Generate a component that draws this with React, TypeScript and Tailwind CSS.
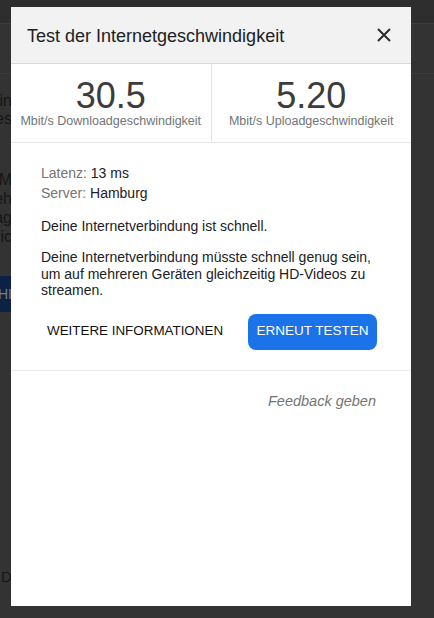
import React from "react";

function BgLine({ text, className = "" }: { text: string; className?: string }) {
  return (
    <div className={`flex w-[12px] justify-end overflow-hidden whitespace-nowrap ${className}`}>
      <span>{text}</span>
    </div>
  );
}

function Stat({ value, label, border }: { value: string; label: string; border?: boolean }) {
  return (
    <div className={`flex flex-1 flex-col items-center pt-[14px] pb-[14px] ${border ? "border-r border-[#e3e3e3]" : ""}`}>
      <div className="text-[36px] leading-[36px] text-[#3c3c3c]">{value}</div>
      <div className="text-[12.5px] leading-[14px] text-[#70757a]">{label}</div>
    </div>
  );
}

export default function App() {
  return (
    <div
      className="relative h-[618px] w-[434px] overflow-hidden bg-[#333333]"
      style={{ fontFamily: '"Liberation Sans", Arial, sans-serif' }}
    >
      {/* dimmed page behind the dialog */}
      <div className="flex flex-col text-[16px] text-[#161616]">
        <div className="h-[24px] border-b border-[#3c3c3c] bg-[#2e2e2e]" />
        <div className="h-[50px] border-b border-[#3c3c3c]" />
        <BgLine text="Mbit/s in" className="mt-[18px] leading-[18px]" />
        <BgLine text="Werte es" className="leading-[18px]" />
        <BgLine text="Test [M" className="mt-[42px] leading-[19px]" />
        <BgLine text="mehr eh" className="leading-[19px]" />
        <BgLine text="Frag ag" className="leading-[19px]" />
        <BgLine text="Technic" className="leading-[19px]" />
        <div className="mt-[30px] flex h-[36px] w-[12px] items-center justify-end overflow-hidden whitespace-nowrap bg-[#0b2245] text-[14px] text-[#7a7a7a]">
          <span>STARTEN HI</span>
        </div>
        <div className="mt-[256px] pl-[1px] text-[15px] leading-[18px]">D</div>
      </div>

      {/* dialog */}
      <div className="absolute left-[11px] top-[7px] flex h-[599px] w-[400px] flex-col bg-white">
        <div className="flex h-[57px] items-center justify-between border-b border-[#d9d9d9] bg-[#f2f2f2] pl-[16px] pr-[20px] pt-[1px]">
          <div className="text-[18px] leading-[24px] text-[#202124]">Test der Internetgeschwindigkeit</div>
          <svg width="14" height="14" viewBox="0 0 14 14" className="mt-[-1px]">
            <path d="M1 1 L13 13 M13 1 L1 13" stroke="#2b2b2b" strokeWidth="2" fill="none" />
          </svg>
        </div>

        <div className="flex border-b border-[#e8e8e8]">
          <Stat value="30.5" label="Mbit/s Downloadgeschwindigkeit" border />
          <Stat value="5.20" label="Mbit/s Uploadgeschwindigkeit" />
        </div>

        <div className="flex flex-col border-b border-[#ebebeb] pb-[20px] pl-[30px] pr-[34px] pt-[20px] text-[14px] text-[#202124]">
          <div className="leading-[20px]">
            <span className="text-[#757575]">Latenz: </span>13 ms
          </div>
          <div className="leading-[20px]">
            <span className="text-[#757575]">Server: </span>Hamburg
          </div>
          <p className="mt-[15px] leading-[17px]">Deine Internetverbindung ist schnell.</p>
          <p className="mt-[14px] leading-[16.5px]">
            Deine Internetverbindung müsste schnell genug sein, um auf mehreren Geräten gleichzeitig HD-Videos zu streamen.
          </p>
          <div className="mt-[15px] flex items-center justify-between">
            <button className="flex h-[36px] items-center px-[6px] text-[13.4px] text-[#111111]">
              WEITERE INFORMATIONEN
            </button>
            <button className="flex h-[36px] w-[129px] items-center justify-center rounded-[8px] bg-[#1a73e8] text-[13.5px] text-white">
              ERNEUT TESTEN
            </button>
          </div>
        </div>

        <div className="flex justify-end pr-[35px] pt-[20px]">
          <span className="text-[14.5px] italic leading-[20px] text-[#757575]">Feedback geben</span>
        </div>
      </div>
    </div>
  );
}
